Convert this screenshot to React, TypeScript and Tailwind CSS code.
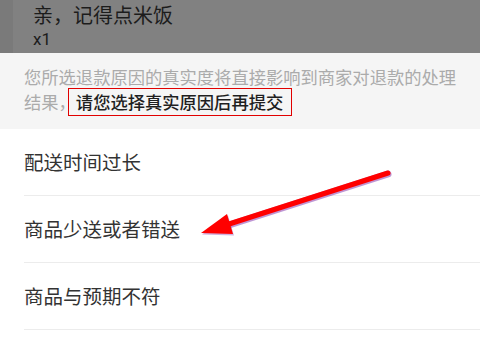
export default function App() {
  const reasons = ["配送时间过长", "商品少送或者错送", "商品与预期不符"];

  return (
    <div
      className="relative w-[480px] h-[341px] overflow-hidden bg-white"
      style={{ fontFamily: '"Noto Sans CJK SC", "Noto Sans", sans-serif' }}
    >
      {/* dimmed order item */}
      <div className="flex h-[53px] bg-[#818181]">
        <div className="w-[13px] bg-[#7a7a7a]" />
        <div className="pl-[20px]">
          <div className="text-[20px] leading-[29px] text-[#1c1c1c]">亲，记得点米饭</div>
          <div className="text-[17px] leading-[20px] text-[#1c1c1c] font-['Roboto',sans-serif]">x1</div>
        </div>
      </div>

      {/* notice */}
      <div className="bg-[#f5f5f5] h-[76px] pl-[24px] pr-[16px] pt-[12px]">
        <div className="text-[17.3px] leading-[24px] text-[#ababab] whitespace-nowrap">
          您所选退款原因的真实度将直接影响到商家对退款的处理
        </div>
        <div className="flex items-center mt-[-1px] text-[17.3px] text-[#ababab] whitespace-nowrap">
          <span>结果，</span>
          <span className="ml-[-8px] border border-[#e10000] h-[28px] pl-[7px] pr-[8px] flex items-center font-medium text-[#1f1f1f]">
            请您选择真实原因后再提交
          </span>
        </div>
      </div>

      {/* reasons */}
      <div className="pl-[24px]">
        {reasons.map((r) => (
          <div
            key={r}
            className="h-[67px] flex items-center border-b border-[#ececec] text-[19.5px] text-[#333333]"
          >
            {r}
          </div>
        ))}
      </div>

      {/* annotation arrow */}
      <svg
        className="absolute left-0 top-0"
        width="480"
        height="341"
        viewBox="0 0 480 341"
      >
        <line x1="388" y1="174" x2="226" y2="226" stroke="#8a3fb0" strokeOpacity="0.55" strokeWidth="7" strokeLinecap="round" />
        <polygon points="201,233 227,214 233,234" fill="#8a3fb0" fillOpacity="0.4" transform="translate(1,1.5)" />
        <line x1="388" y1="173" x2="226" y2="225" stroke="#ff0000" strokeWidth="5" strokeLinecap="round" />
        <polygon points="201,233 227,214 233,234" fill="#ff0000" />
      </svg>
    </div>
  );
}
